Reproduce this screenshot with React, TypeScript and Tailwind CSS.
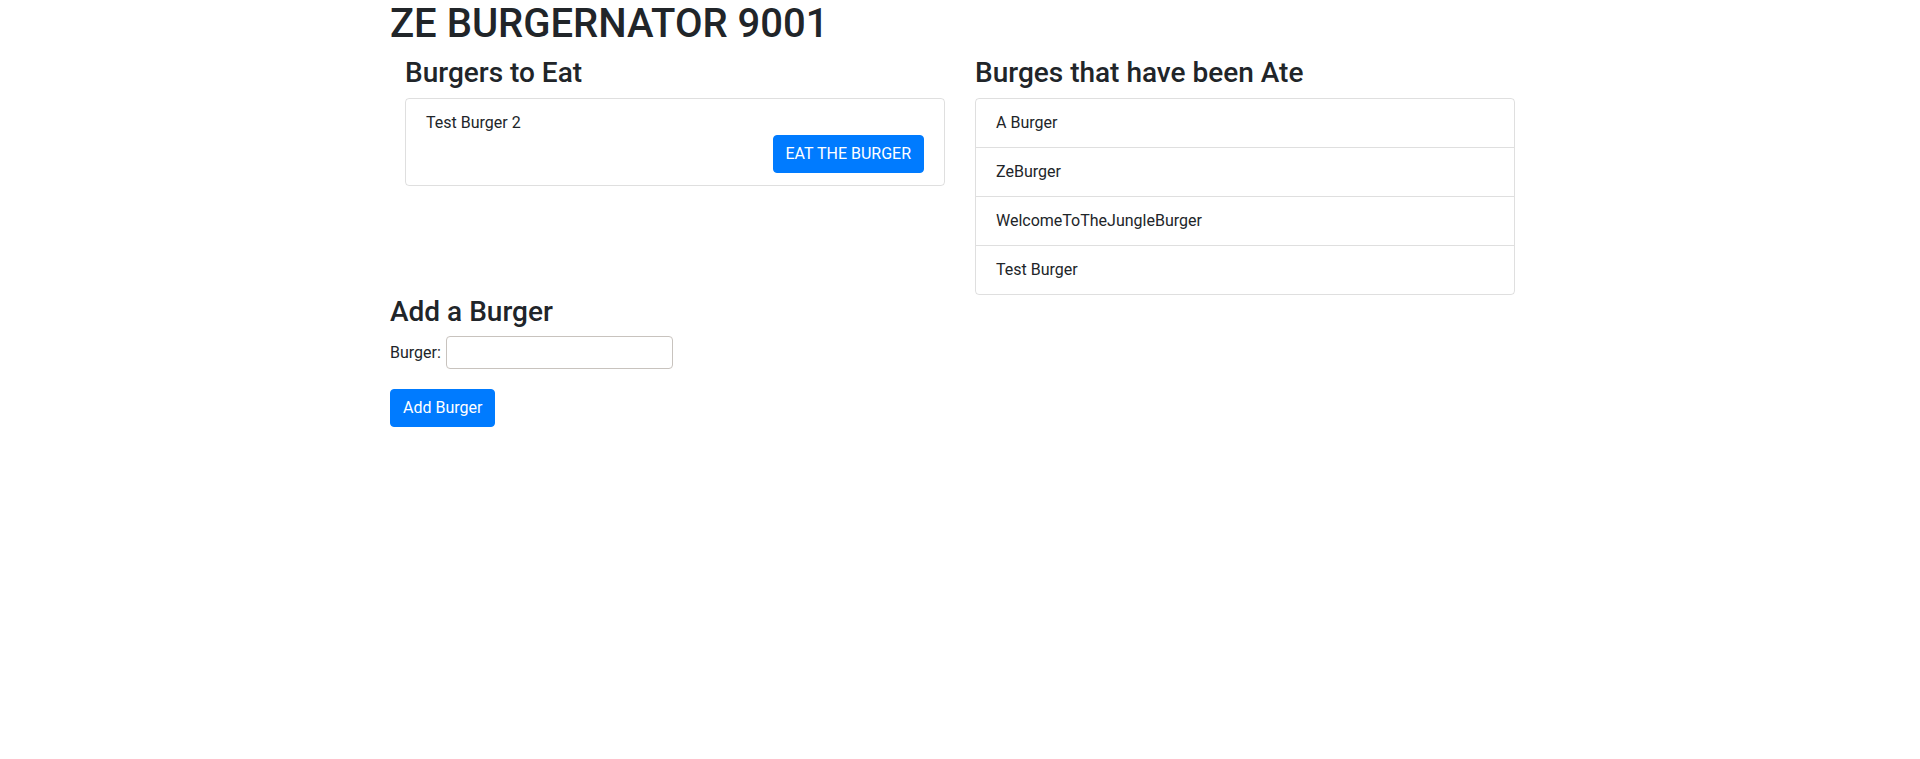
import { FC } from "react";

const toEat = ["Test Burger 2"];
const eaten = ["A Burger", "ZeBurger", "WelcomeToTheJungleBurger", "Test Burger"];

const App: FC = () => {
  return (
    <div className="min-h-screen bg-white text-[#212529] font-['Roboto','Liberation_Sans',sans-serif] text-base leading-6">
      <div className="w-[1140px] mx-auto">
        <h1 className="text-[40px] leading-[48px] font-medium mb-2">ZE BURGERNATOR 9001</h1>

        <div className="grid grid-cols-2">
          <div className="px-[15px]">
            <h3 className="text-[28px] leading-[33.6px] font-medium mb-2">Burgers to Eat</h3>
            <ul className="border border-black/[0.125] rounded">
              {toEat.map((b) => (
                <li key={b} className="px-5 py-3">
                  <p>{b}</p>
                  <div className="flex justify-end">
                    <button className="bg-[#007bff] text-white border border-[#007bff] rounded px-3 py-1.5 leading-6">
                      EAT THE BURGER
                    </button>
                  </div>
                </li>
              ))}
            </ul>
          </div>

          <div className="px-[15px]">
            <h3 className="text-[28px] leading-[33.6px] font-medium mb-2">Burges that have been Ate</h3>
            <ul className="border border-black/[0.125] rounded">
              {eaten.map((b, i) => (
                <li key={b} className={`px-5 py-3 ${i > 0 ? "border-t border-black/[0.125]" : ""}`}>
                  {b}
                </li>
              ))}
            </ul>
          </div>
        </div>

        <h3 className="text-[28px] leading-[33.6px] font-medium mb-2">Add a Burger</h3>
        <form onSubmit={(e) => e.preventDefault()}>
          <div className="flex items-center">
            <label htmlFor="burger">Burger:</label>
            <input
              id="burger"
              type="text"
              className="ml-[5px] w-[227px] h-[33px] border border-[#c8c3be] rounded px-2 outline-none"
            />
          </div>
          <button
            type="submit"
            className="mt-5 bg-[#007bff] text-white border border-[#007bff] rounded px-3 py-1.5 leading-6"
          >
            Add Burger
          </button>
        </form>
      </div>
    </div>
  );
};

export default App;
